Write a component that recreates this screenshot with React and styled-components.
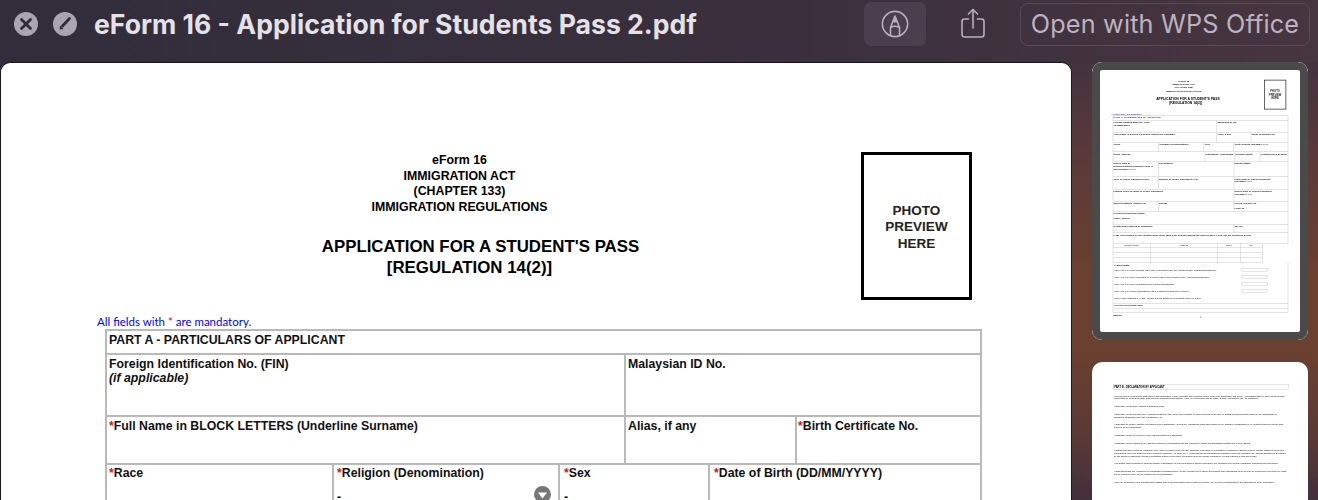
import React from 'react';
import styled, { createGlobalStyle } from 'styled-components';

const GlobalStyle = createGlobalStyle`
  html, body {
    margin: 0;
    padding: 0;
    background: #302c3b;
  }
`;

const Window = styled.div`
  width: 1318px;
  height: 500px;
  overflow: hidden;
  display: flex;
  flex-direction: column;
  background: linear-gradient(90deg, #312d3b 0%, #3a303d 60%, #47353f 100%);
`;

const Toolbar = styled.div`
  height: 62px;
  flex: none;
  display: flex;
  align-items: center;
  box-sizing: border-box;
  padding: 0 8px 14px 14px;
`;

const RoundIcon = styled.svg`
  width: 24px;
  height: 24px;
  flex: none;
  margin-right: ${(p) => p.$gap}px;
`;

const FileName = styled.div`
  font-family: Inter, "Liberation Sans", sans-serif;
  font-weight: 700;
  font-size: 26.6px;
  color: #e4e2e7;
  white-space: nowrap;
`;

const Actions = styled.div`
  margin-left: auto;
  display: flex;
  align-items: center;
`;

const MarkupButton = styled.div`
  width: 62px;
  height: 44px;
  border-radius: 7px;
  background: #4a3e4f;
  display: flex;
  align-items: center;
  justify-content: center;
`;

const ShareButton = styled.div`
  width: 24px;
  height: 30px;
  margin: -2px 35px 0 35px;
`;

const OpenWith = styled.div`
  width: 290px;
  height: 43px;
  box-sizing: border-box;
  border: 1px solid #574a5a;
  border-radius: 8px;
  display: flex;
  align-items: center;
  justify-content: center;
  font-family: Inter, "Liberation Sans", sans-serif;
  font-size: 25.2px;
  letter-spacing: 0.2px;
  color: #bdb2c1;
  white-space: nowrap;
`;

const Body = styled.div`
  flex: 1;
  min-height: 0;
  display: flex;
`;

const Sheet = styled.div`
  width: 1072px;
  flex: none;
  box-sizing: border-box;
  border: 1px solid #17151a;
  border-bottom: 0;
  border-radius: 10px 10px 0 0;
  background: #fff;
  overflow: hidden;
`;

const Sidebar = styled.div`
  flex: 1;
  display: flex;
  flex-direction: column;
  gap: 22px;
  padding-left: 20px;
  overflow: hidden;
  background: linear-gradient(
    180deg,
    #42333f 0,
    #59393a 90px,
    #6b4130 220px,
    #6a4030 290px,
    #5a3a36 370px,
    #42303c 438px
  );
`;

const Thumb = styled.div`
  width: 216px;
  height: ${(p) => p.$h}px;
  flex: none;
  position: relative;
  overflow: hidden;
  border-radius: 10px;
  background: #fff;

  ${(p) =>
    p.$selected &&
    `
    &::after {
      content: "";
      position: absolute;
      inset: 0;
      border: 8px solid #4a4a4a;
      border-radius: 10px;
    }
  `}
`;

// blur sits outside the scale so it is measured in screen pixels
const ThumbBlur = styled.div`
  height: 100%;
  overflow: hidden;
  filter: blur(0.45px);
`;

const ThumbScale = styled.div`
  width: 1080px;
  transform: scale(0.2);
  transform-origin: 0 0;
`;

const Page = styled.div`
  width: 1070px;
  box-sizing: border-box;
  padding: 89px 0 0 96px;
  font-family: "Liberation Sans", Arial, sans-serif;
  color: #000;
`;

const Masthead = styled.div`
  display: flex;
  height: 148px;
`;

const TitleBlock = styled.div`
  width: 725px;
  padding-top: 1px;
  text-align: center;
  font-weight: 700;
`;

const ActLine = styled.div`
  font-size: 12.35px;
  line-height: 15.7px;
`;

const FormTitle = styled.div`
  font-size: 16.85px;
  line-height: 21px;
  margin: 20px 0 0 42px;
  white-space: nowrap;
`;

const FormSubtitle = styled.div`
  padding-right: 22px;
`;

const PhotoBox = styled.div`
  width: 111px;
  height: 148px;
  margin-left: 39px;
  box-sizing: border-box;
  border: 3px solid #000;
  padding-top: 3px;
  display: flex;
  align-items: center;
  justify-content: center;
  text-align: center;
  font-weight: 700;
  font-size: 13.5px;
  line-height: 16.3px;
  color: #222;
`;

const Note = styled.div`
  font-family: Lato, "Open Sans", sans-serif;
  font-size: 11.5px;
  line-height: 14px;
  margin-top: 15px;
  color: #0000f0;
`;

const Star = styled.span`
  color: #e01010;
`;

const Table = styled.div`
  width: 877px;
  margin-left: 8px;
  border-top: 2px solid #b9b9b9;
  border-left: 2px solid #b9b9b9;
  box-sizing: border-box;
`;

const Row = styled.div`
  display: flex;
  height: ${(p) => p.$h}px;
  box-sizing: border-box;
  border-bottom: 2px solid #b9b9b9;
`;

const Cell = styled.div`
  position: relative;
  flex: ${(p) => (p.$w ? `0 0 ${p.$w}px` : '1')};
  box-sizing: border-box;
  border-right: 2px solid #b9b9b9;
  padding: ${(p) => p.$top ?? 2}px 2px 0 ${(p) => p.$x ?? 2}px;
  font-size: 12.3px;
  line-height: 14px;
  font-weight: 700;
  color: #111;
`;

const Hint = styled.div`
  font-style: italic;
`;

const FieldValue = styled.div`
  margin-top: 10px;
  font-weight: 700;
`;

const SelectArrow = styled.svg`
  position: absolute;
  right: 7px;
  top: 21px;
  width: 17px;
  height: 17px;
`;

const SubTable = styled.div`
  display: grid;
  grid-template-columns: 186px 335px 115px 110px;
  width: 750px;
`;

const SubCell = styled.div`
  height: ${(p) => p.$h}px;
  box-sizing: border-box;
  border-right: 2px solid #b9b9b9;
  border-bottom: 2px solid #b9b9b9;
  font-size: 12px;
  line-height: 14px;
  text-align: center;
`;

const QuestionBlock = styled.div`
  border-right: 2px solid #b9b9b9;
  border-bottom: 2px solid #b9b9b9;
  padding: 4px 4px 0;
  height: 205px;
  box-sizing: border-box;
  font-size: 12px;
  font-weight: 400;
`;

const Question = styled.div`
  display: flex;
  align-items: center;
  height: 35px;
`;

const AnswerBox = styled.div`
  width: 128px;
  height: 16px;
  margin-left: auto;
  margin-right: 96px;
  border: 1px solid #777;
`;

const Foot = styled.div`
  font-size: 12px;
  font-weight: 700;
  margin: 6px 0 0 9px;
`;

const Caret = styled.div`
  font-size: 14px;
  text-align: center;
  width: 876px;
  margin-left: 9px;
`;

const DeclarationPageBox = styled.div`
  width: 982px;
  box-sizing: border-box;
  padding: 110px 0 0 106px;
  font-family: "Liberation Sans", Arial, sans-serif;
  color: #000;
`;

const DeclarationHead = styled.div`
  border: 2px solid #b9b9b9;
  font-size: 13px;
  font-weight: 700;
  line-height: 24px;
  padding-left: 3px;
`;

const Paragraph = styled.p`
  margin: 26px 4px 0;
  font-size: 11.5px;
  line-height: 13px;
`;

const firstPart = [
  {
    h: 62,
    cells: [
      { w: 519, label: 'Foreign Identification No. (FIN)', hint: '(if applicable)' },
      { label: 'Malaysian ID No.' },
    ],
  },
  {
    h: 48,
    cells: [
      { w: 519, label: 'Full Name in BLOCK LETTERS (Underline Surname)', required: true },
      { w: 171, label: 'Alias, if any' },
      { label: 'Birth Certificate No.', required: true, x: 1 },
    ],
  },
  {
    h: 48,
    top: 1,
    cells: [
      { w: 227, label: 'Race', required: true },
      { w: 226, label: 'Religion (Denomination)', required: true, value: '-', select: true, x: 3 },
      { w: 150, label: 'Sex', required: true, value: '-', x: 4 },
      { label: 'Date of Birth (DD/MM/YYYY)', required: true, x: 4 },
    ],
  },
  {
    h: 47,
    cells: [
      { w: 460, label: 'Email Address' },
      { w: 150, label: 'Nationality / Citizenship' },
      { w: 125, label: 'Province/State' },
      { label: 'Country/Place of Birth' },
    ],
  },
  {
    h: 78,
    cells: [
      { w: 227, label: "Expiry Date of Employment/Dependant's Pass, if any (DD/MM/YYYY)" },
      { w: 378, label: 'Occupation' },
      { label: 'Marital Status' },
    ],
  },
  {
    h: 62,
    cells: [
      { w: 227, label: 'Type of Travel Document Held' },
      { w: 378, label: 'Number of Travel Document Held' },
      { label: 'Issue Date of Travel Document (DD/MM/YYYY)' },
    ],
  },
  {
    h: 60,
    cells: [
      { w: 605, label: 'Issuing Place or Issue of Travel Document' },
      { label: 'Expiry Date of Travel Document (DD/MM/YYYY)' },
    ],
  },
  {
    h: 50,
    cells: [
      { w: 227, label: 'School/Institute Applied For' },
      { w: 378, label: 'Course' },
      { label: 'Period Applied For', value: 'From        To' },
    ],
  },
  { h: 65, cells: [{ label: 'Present Residential Status', value: 'Letter:  Mobile:' }] },
  {
    h: 43,
    cells: [
      { w: 605, label: 'Residential Address in Singapore' },
      { label: 'Tel. No.' },
    ],
  },
  {
    h: 52,
    cells: [
      { label: 'Have you resided in any country/place other than your country during the last 5 years? If yes, list the countries below' },
    ],
  },
];

const questions = [
  'Have you ever been refused entry into or deported from any country/place, including Singapore?',
  'Have you ever been convicted in a court of law in any country/place, including Singapore?',
  'Have you ever been prohibited from entering Singapore?',
  'Have you ever entered Singapore using a different Passport or Name?',
  'If any of the answers is "YES", please furnish details on a separate sheet of paper',
];

const declarations = [
  'I declare that all information submitted in this application is true, accurate and complete to the best of my knowledge and belief. I understand that if I have provided false information or concealed facts, that could be misleading information, I may be prosecuted and be liable, and my application may be withdrawn.',
  "I undertake not to study without a Student's Pass.",
  'I undertake not to indulge in any unlawful drugs or to take part in any political or other activities in any way in Singapore which would make me an undesirable or prohibited immigrant under the Immigration Act.',
  'I undertake to comply with the provisions of the Immigration Act and any regulations made thereunder or any statutory modification or re-enactment thereof for the time being in force in Singapore.',
  'I undertake not to be involved in any criminal offences in Singapore.',
  'I undertake not to change to any activities which are inconsistent with the purpose for which the immigration passes have been issued.',
  'I further undertake not to be engaged in any form of employment or in any business, profession or occupation in Singapore whether paid or unpaid, without a valid work pass issued under the Employment of Foreign Manpower Act (Cap. 91A). I understand that immigration permission does not constitute any training attachment permitted by the school or otherwise unless it constitutes employment under the Employment of Foreign Manpower Act and requires a valid work pass.',
  'I am aware that remaining or working illegally in Singapore is a serious offence and on conviction, the penalties may include mandatory imprisonment and caning.',
  'I understand that any Controller of Immigration is satisfied that I, or any member of my family dependent, has undertaking to do so may be cancelled or revoked, my pass will be cancelled and I will be required to leave Singapore.',
  'I give my consent for your department to obtain and verify information from or with any source, as you deem appropriate for the assessment of my application.',
];

const CloseIcon = () => (
  <RoundIcon viewBox="0 0 24 24" $gap={15}>
    <circle cx="12" cy="12" r="12" fill="#a9a5b2" />
    <path d="M7.5 7.5l9 9M16.5 7.5l-9 9" stroke="#302c3a" strokeWidth="2.8" strokeLinecap="round" />
  </RoundIcon>
);

const EditOffIcon = () => (
  <RoundIcon viewBox="0 0 24 24" $gap={17}>
    <circle cx="12" cy="12" r="12" fill="#a9a5b2" />
    <path d="M16.5 6.5L9.5 14" stroke="#302c3a" strokeWidth="2.8" strokeLinecap="round" />
    <path d="M7 13.5L6.6 17.4L10.5 17z" fill="#302c3a" />
  </RoundIcon>
);

const MarkupIcon = () => (
  <svg width="28" height="28" viewBox="0 0 28 28" fill="none" stroke="#b9aebd" strokeWidth="1.6">
    <circle cx="14" cy="14" r="12.6" />
    <path d="M9.5 25.5V17.5L14 6L18.5 17.5V25.5" strokeLinejoin="round" />
    <path d="M9.5 17.5Q14 15 18.5 17.5" />
    <path d="M14 6L12.2 12.5H15.8z" fill="#b9aebd" stroke="none" />
  </svg>
);

const ShareIcon = () => (
  <svg width="24" height="30" viewBox="0 0 24 30" fill="none" stroke="#b9aebd" strokeWidth="1.6" strokeLinecap="round" strokeLinejoin="round">
    <path d="M7.5 11H3.5a2.5 2.5 0 0 0-2.5 2.5v13a2.5 2.5 0 0 0 2.5 2.5h17a2.5 2.5 0 0 0 2.5-2.5v-13a2.5 2.5 0 0 0-2.5-2.5h-4" />
    <path d="M12 20V1.5" />
    <path d="M7.5 6L12 1.5L16.5 6" />
  </svg>
);

const ApplicationPage = ({ blank }) => (
  <Page>
    <Masthead>
      <TitleBlock>
        <ActLine>eForm 16</ActLine>
        <ActLine>IMMIGRATION ACT</ActLine>
        <ActLine>(CHAPTER 133)</ActLine>
        <ActLine>IMMIGRATION REGULATIONS</ActLine>
        <FormTitle>
          APPLICATION FOR A STUDENT'S PASS
          <FormSubtitle>[REGULATION 14(2)]</FormSubtitle>
        </FormTitle>
      </TitleBlock>
      <PhotoBox>
        PHOTO
        <br />
        PREVIEW
        <br />
        HERE
      </PhotoBox>
    </Masthead>
    <Note>
      All fields with <Star>*</Star> are mandatory.
    </Note>
    <Table>
      <Row $h={24}>
        <Cell>PART A - PARTICULARS OF APPLICANT</Cell>
      </Row>
      {firstPart.map((row, i) => (
        <Row key={i} $h={row.h}>
          {row.cells.map((cell) => (
            <Cell key={cell.label} $w={cell.w} $x={cell.x} $top={row.top}>
              {cell.required && <Star>*</Star>}
              {cell.label}
              {cell.hint && <Hint>{cell.hint}</Hint>}
              {cell.value && <FieldValue>{cell.value}</FieldValue>}
              {cell.select && !blank && (
                <SelectArrow viewBox="0 0 17 17">
                  <circle cx="8.5" cy="8.5" r="8.5" fill="#777" />
                  <path d="M4 6.5h9L8.5 12.5z" fill="#fff" />
                </SelectArrow>
              )}
            </Cell>
          ))}
        </Row>
      ))}
      <SubTable>
        <SubCell $h={22}>Country/Place</SubCell>
        <SubCell $h={22}>Address</SubCell>
        <SubCell $h={22}>From</SubCell>
        <SubCell $h={22}>To</SubCell>
        {[0, 1, 2].map((i) => (
          <React.Fragment key={i}>
            <SubCell $h={25} />
            <SubCell $h={25} />
            <SubCell $h={25} />
            <SubCell $h={25} />
          </React.Fragment>
        ))}
      </SubTable>
      <QuestionBlock>
        <b>*Antecedents</b>
        {questions.map((q, i) => (
          <Question key={q}>
            {q}
            {i < 4 && <AnswerBox />}
          </Question>
        ))}
      </QuestionBlock>
      <Row $h={25}>
        <Cell>APPLICANT'S REMARKS</Cell>
      </Row>
      <Row $h={20}>
        <Cell />
      </Row>
    </Table>
    <Foot>UEN/FS</Foot>
    <Caret>^</Caret>
  </Page>
);

const DeclarationPage = () => (
  <DeclarationPageBox>
    <DeclarationHead>PART B - DECLARATION BY APPLICANT</DeclarationHead>
    {declarations.map((text) => (
      <Paragraph key={text}>{text}</Paragraph>
    ))}
  </DeclarationPageBox>
);

const App = () => {
  return (
    <Window>
      <GlobalStyle />
      <Toolbar>
        <CloseIcon />
        <EditOffIcon />
        <FileName>eForm 16 - Application for Students Pass 2.pdf</FileName>
        <Actions>
          <MarkupButton>
            <MarkupIcon />
          </MarkupButton>
          <ShareButton>
            <ShareIcon />
          </ShareButton>
          <OpenWith>Open with WPS Office</OpenWith>
        </Actions>
      </Toolbar>
      <Body>
        <Sheet>
          <ApplicationPage />
        </Sheet>
        <Sidebar>
          <Thumb $h={278} $selected>
            <ThumbBlur>
              <ThumbScale>
                <ApplicationPage blank />
              </ThumbScale>
            </ThumbBlur>
          </Thumb>
          <Thumb $h={300}>
            <ThumbBlur>
              <ThumbScale>
                <DeclarationPage />
              </ThumbScale>
            </ThumbBlur>
          </Thumb>
        </Sidebar>
      </Body>
    </Window>
  );
};

export default App;
